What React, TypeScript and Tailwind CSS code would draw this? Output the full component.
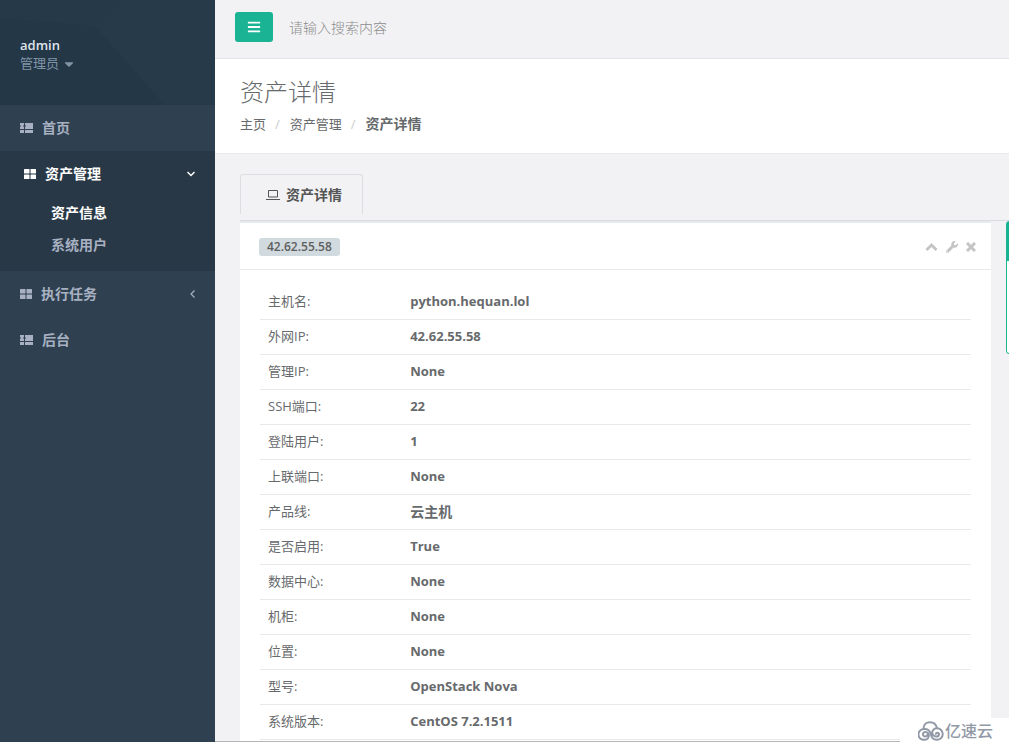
import { FaBars, FaCaretDown, FaWrench } from "react-icons/fa";

const assetRows = [
  { label: "主机名:", value: "python.hequan.lol" },
  { label: "外网IP:", value: "42.62.55.58" },
  { label: "管理IP:", value: "None" },
  { label: "SSH端口:", value: "22" },
  { label: "登陆用户:", value: "1" },
  { label: "上联端口:", value: "None" },
  { label: "产品线:", value: "云主机", cjk: true },
  { label: "是否启用:", value: "True" },
  { label: "数据中心:", value: "None" },
  { label: "机柜:", value: "None" },
  { label: "位置:", value: "None" },
  { label: "型号:", value: "OpenStack Nova" },
  { label: "系统版本:", value: "CentOS 7.2.1511" },
];

function ListIcon() {
  return (
    <svg width="13" height="10" viewBox="0 0 13 10" fill="currentColor" aria-hidden="true">
      <path d="M0 0h4v2.500H3v1h1V6H0V3.500h1v-1H0zM5 0h8v6H5V3.500h1v-1H5zM0 7h4v3H0zM5 7h8v3H5z" />
    </svg>
  );
}

function GridIcon() {
  return (
    <svg width="12" height="10" viewBox="0 0 12 10" fill="currentColor" aria-hidden="true">
      <rect width="5.5" height="4.5" rx="0.5" />
      <rect x="6.5" width="5.5" height="4.5" rx="0.5" />
      <rect y="5.5" width="5.5" height="4.5" rx="0.5" />
      <rect x="6.5" y="5.5" width="5.5" height="4.5" rx="0.5" />
    </svg>
  );
}

function LaptopIcon() {
  return (
    <svg width="14" height="10" viewBox="0 0 14 10" fill="none" stroke="currentColor" aria-hidden="true">
      <path d="M2.5 .5h9v6.5h-9zM0 9.5h14" />
    </svg>
  );
}

function Sidebar() {
  return (
    <nav className="w-[215px] shrink-0 bg-[#2f4050] text-sm font-semibold text-[#a7b1c2]">
      <div className="relative h-[105px] bg-[#263949] px-5 pt-9">
        <svg className="absolute inset-0 h-full w-full" viewBox="0 0 215 105" preserveAspectRatio="none" aria-hidden="true">
          <path d="M0 18L95 26L165 105H0z" fill="#243747" />
          <path d="M95 26L125 0H215V105H165z" fill="#273a4a" />
        </svg>
        <div className="relative">
          <div className="text-[13px] leading-[18px] font-semibold text-[#dfe4ed]">admin</div>
          <button type="button" className="flex items-center text-[13px] leading-[18px] font-normal text-[#8095a8]">
            管理员
            <FaCaretDown className="mt-px ml-[3px] size-3.5" />
          </button>
        </div>
      </div>
      <ul>
        <li>
          <a href="#home" className="flex h-[46px] items-center gap-[9px] px-5">
            <ListIcon />
            首页
          </a>
        </li>
        <li className="h-[120px] bg-[#293846] text-white">
          <a href="#assets" className="flex h-[46px] items-center gap-[9px] pr-5 pl-6">
            <GridIcon />
            资产管理
            <svg className="ml-auto" width="8" height="6" viewBox="0 0 8 6" fill="none" stroke="currentColor" strokeWidth="1.5" aria-hidden="true">
              <path d="M.5 1L4 4.5L7.5 1" />
            </svg>
          </a>
          <ul>
            <li>
              <a href="#asset-info" className="flex h-8 items-center pl-[51px]">资产信息</a>
            </li>
            <li>
              <a href="#system-users" className="flex h-8 items-center pl-[51px] text-[#a7b1c2]">系统用户</a>
            </li>
          </ul>
        </li>
        <li>
          <a href="#tasks" className="flex h-[46px] items-center gap-[9px] px-5">
            <GridIcon />
            执行任务
            <svg className="ml-auto" width="5" height="8" viewBox="0 0 5 8" fill="none" stroke="currentColor" strokeWidth="1.2" aria-hidden="true">
              <path d="M4.5 .5L1 4L4.5 7.5" />
            </svg>
          </a>
        </li>
        <li>
          <a href="#admin" className="flex h-[46px] items-center gap-[9px] px-5">
            <ListIcon />
            后台
          </a>
        </li>
      </ul>
    </nav>
  );
}

function TopBar() {
  return (
    <header className="flex h-[59px] items-start border-b border-[#e1e4e8] px-5 pt-3">
      <button type="button" aria-label="菜单" className="flex h-[30px] w-[38px] items-center justify-center rounded-[3px] bg-[#1ab394] text-white">
        <FaBars className="size-3.5" />
      </button>
      <input
        type="text"
        aria-label="搜索"
        placeholder="请输入搜索内容"
        className="ml-4 h-[30px] flex-1 bg-transparent text-sm font-light outline-none placeholder:text-[#8c8c8c]"
      />
    </header>
  );
}

function PageHeading() {
  return (
    <div className="h-[95px] border-b border-[#e7eaec] bg-white px-[25px] pt-[19px]">
      <h2 className="text-2xl leading-7 font-light">资产详情</h2>
      <ol className="mt-[9px] flex text-[13px] leading-[18px]">
        <li><a href="#home">主页</a></li>
        <li className="px-[9px] text-[#ccc]">/</li>
        <li className="pl-px"><a href="#assets">资产管理</a></li>
        <li className="px-[9px] text-[#ccc]">/</li>
        <li className="pl-px text-sm leading-[18px] font-bold">资产详情</li>
      </ol>
    </div>
  );
}

function AssetPanel() {
  return (
    <section className="min-w-0 flex-1 border-t-2 border-[#e7eaec] bg-white pb-px">
      <div className="flex h-[47px] items-center justify-between border-b border-[#e7eaec] pt-px pr-[15px] pl-[19px]">
        <span className="rounded-[3px] bg-[#d1dade] px-2 text-xs leading-[18px] font-semibold text-[#5e5e5e]">42.62.55.58</span>
        <div className="flex items-center gap-2 pt-px text-[#c4c4c4]">
          <button type="button" aria-label="收起">
            <svg width="13" height="12" viewBox="0 0 13 12" fill="none" stroke="currentColor" strokeWidth="2.8" aria-hidden="true">
              <path d="M1.500 9L6.500 4L11.500 9" />
            </svg>
          </button>
          <button type="button" aria-label="设置"><FaWrench className="size-3" /></button>
          <button type="button" aria-label="关闭">
            <svg width="10" height="10" viewBox="0 0 10 10" stroke="currentColor" strokeWidth="3" aria-hidden="true">
              <path d="M1 1L9 9M9 1L1 9" />
            </svg>
          </button>
        </div>
      </div>
      <div className="px-5 pt-3.5">
        <table className="w-full table-fixed border-collapse text-left text-[13px]">
          <tbody>
            {assetRows.map((row) => (
              <tr key={row.label} className="h-[35px] border-b border-[#e7eaec]">
                <th scope="row" className="w-1/5 px-2 pt-px font-normal">{row.label}</th>
                <td className={row.cjk ? "px-2 text-sm font-bold" : "px-2 pt-px font-bold"}>{row.value}</td>
              </tr>
            ))}
          </tbody>
        </table>
      </div>
    </section>
  );
}

function Watermark() {
  return (
    <div className="fixed right-0 bottom-0 flex h-[25px] w-[109px] items-center gap-px bg-white pl-[18px] text-[#9299a6]">
      <svg width="26" height="20" viewBox="0 0 26 20" fill="none" stroke="currentColor" strokeWidth="2" strokeLinecap="round" aria-hidden="true">
        <path d="M5.500 7.500C5.500 3.500 8.500 1.200 12 1.200C15.500 1.200 18 3.200 18.800 6.500" />
        <path d="M9.500 13.500A2.300 2.300 0 1 1 7.500 11C10 11 11 13 10.800 15C10.500 17.500 8.500 18.800 6.200 18.800A5.300 5.300 0 0 1 5.500 8C9 7.500 11.500 9.500 12.500 12C13.500 15 13.500 18.800 19 18.800A5.700 5.700 0 0 0 19 7.300C15.500 7.300 13.500 10 14.500 13C15.500 16 20.500 16.500 21 13.500C21.200 11.500 18.500 11 17.800 12.800" />
      </svg>
      <span className="text-base leading-5 font-medium">亿速云</span>
    </div>
  );
}

export default function App() {
  return (
    <div className="overflow-hidden bg-white font-['Open_Sans','Noto_Sans_CJK_SC',sans-serif] text-[#676a6c]">
      <div className="flex">
        <Sidebar />
        <main className="min-w-0 flex-1 overflow-hidden border-b border-[#b5b5b5] bg-[#f2f2f4]">
          <TopBar />
          <PageHeading />
          <div className="pt-5 pl-[25px]">
            <div className="h-[47px] border-b border-[#d9dbde]">
              <button type="button" className="flex h-10 items-center gap-1.5 rounded-t-[3px] border border-b-0 border-[#dcdde0] px-5 pl-[25px] text-sm font-bold text-[#555]">
                <LaptopIcon />
                资产详情
              </button>
            </div>
            <div className="flex items-start">
              <AssetPanel />
              <aside className="-mr-[297px] ml-[15px] h-[133px] w-[300px] rounded-[3px] border border-[#1ab394] bg-white">
                <div className="h-[39px] bg-[#1ab394]" />
              </aside>
            </div>
          </div>
        </main>
      </div>
      <Watermark />
    </div>
  );
}
